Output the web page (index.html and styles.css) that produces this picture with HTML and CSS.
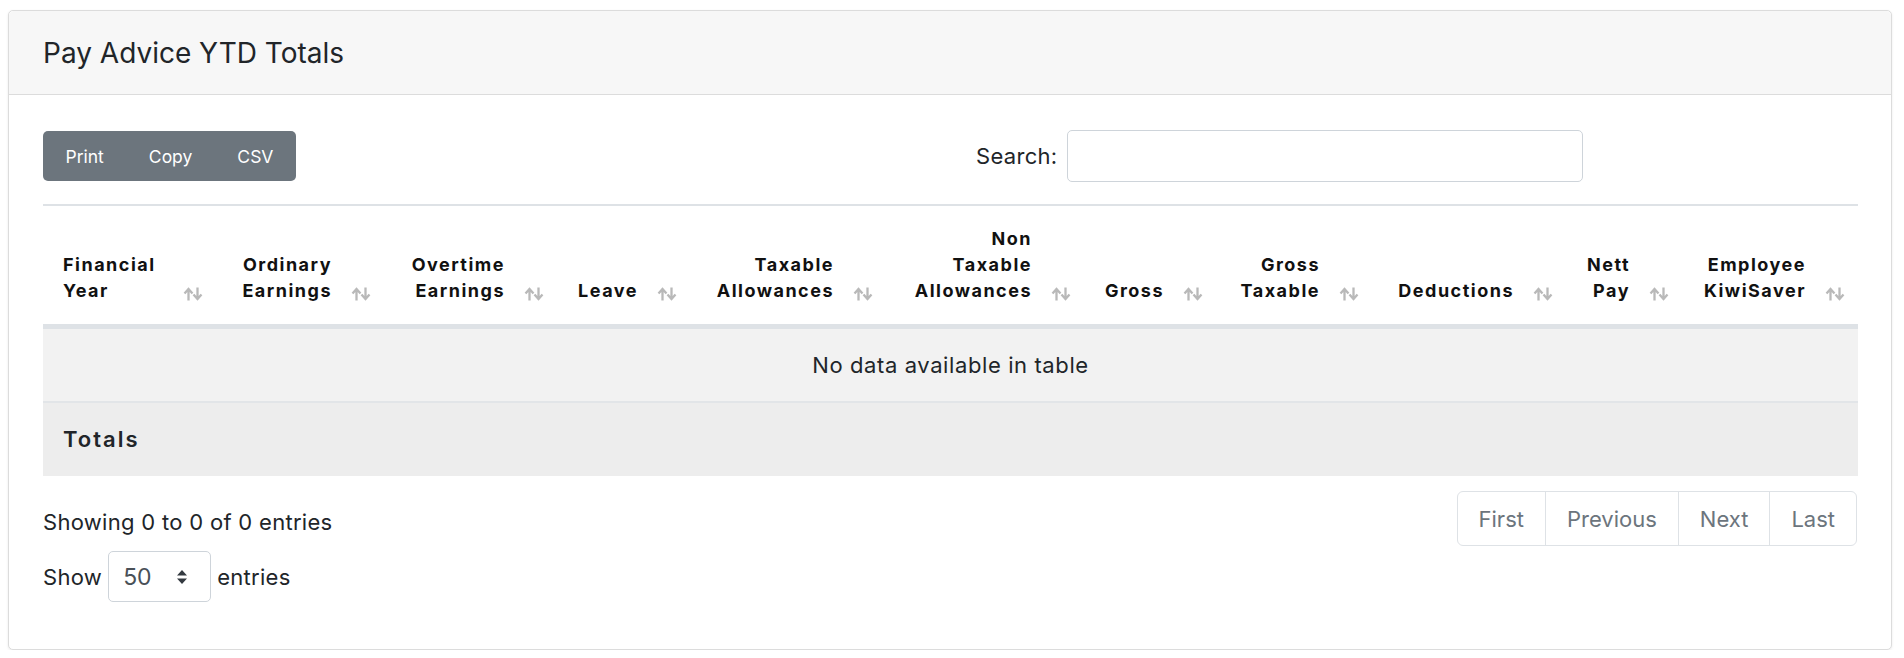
FILE: index.html
```html
<!DOCTYPE html>
<html lang="en">
<head>
  <meta charset="UTF-8" />
  <meta name="viewport" content="width=device-width, initial-scale=1" />
  <title>Pay Advice YTD Totals</title>
  <link rel="stylesheet" href="styles.css">
</head>
<body>
  <div class="card">
    <div class="card-header">
      <h4 class="card-title">Pay Advice YTD Totals</h4>
    </div>
    <div class="card-body">
      <div class="toolbar">
        <div class="btn-group">
          <button class="btn">Print</button>
          <button class="btn">Copy</button>
          <button class="btn">CSV</button>
        </div>
        <div class="search">
          <label>Search: <input type="search" class="search-input"></label>
        </div>
      </div>

      <table class="ytd-table">
        <thead>
          <tr>
            <th class="left">Financial<br>Year<span class="sort"><svg viewBox="0 0 20 14" width="20" height="14"><path d="M5.5 13.5V2.5M1.5 6.5 5.5 2 9.5 6.5M14.5 0.5v11M10.5 7.5 14.5 12 18.5 7.5" fill="none" stroke="#b9b9b9" stroke-width="2.3"/></svg></span></th>
            <th>Ordinary<br>Earnings<span class="sort"><svg viewBox="0 0 20 14" width="20" height="14"><path d="M5.5 13.5V2.5M1.5 6.5 5.5 2 9.5 6.5M14.5 0.5v11M10.5 7.5 14.5 12 18.5 7.5" fill="none" stroke="#b9b9b9" stroke-width="2.3"/></svg></span></th>
            <th>Overtime<br>Earnings<span class="sort"><svg viewBox="0 0 20 14" width="20" height="14"><path d="M5.5 13.5V2.5M1.5 6.5 5.5 2 9.5 6.5M14.5 0.5v11M10.5 7.5 14.5 12 18.5 7.5" fill="none" stroke="#b9b9b9" stroke-width="2.3"/></svg></span></th>
            <th>Leave<span class="sort"><svg viewBox="0 0 20 14" width="20" height="14"><path d="M5.5 13.5V2.5M1.5 6.5 5.5 2 9.5 6.5M14.5 0.5v11M10.5 7.5 14.5 12 18.5 7.5" fill="none" stroke="#b9b9b9" stroke-width="2.3"/></svg></span></th>
            <th>Taxable<br>Allowances<span class="sort"><svg viewBox="0 0 20 14" width="20" height="14"><path d="M5.5 13.5V2.5M1.5 6.5 5.5 2 9.5 6.5M14.5 0.5v11M10.5 7.5 14.5 12 18.5 7.5" fill="none" stroke="#b9b9b9" stroke-width="2.3"/></svg></span></th>
            <th>Non<br>Taxable<br>Allowances<span class="sort"><svg viewBox="0 0 20 14" width="20" height="14"><path d="M5.5 13.5V2.5M1.5 6.5 5.5 2 9.5 6.5M14.5 0.5v11M10.5 7.5 14.5 12 18.5 7.5" fill="none" stroke="#b9b9b9" stroke-width="2.3"/></svg></span></th>
            <th>Gross<span class="sort"><svg viewBox="0 0 20 14" width="20" height="14"><path d="M5.5 13.5V2.5M1.5 6.5 5.5 2 9.5 6.5M14.5 0.5v11M10.5 7.5 14.5 12 18.5 7.5" fill="none" stroke="#b9b9b9" stroke-width="2.3"/></svg></span></th>
            <th>Gross<br>Taxable<span class="sort"><svg viewBox="0 0 20 14" width="20" height="14"><path d="M5.5 13.5V2.5M1.5 6.5 5.5 2 9.5 6.5M14.5 0.5v11M10.5 7.5 14.5 12 18.5 7.5" fill="none" stroke="#b9b9b9" stroke-width="2.3"/></svg></span></th>
            <th>Deductions<span class="sort"><svg viewBox="0 0 20 14" width="20" height="14"><path d="M5.5 13.5V2.5M1.5 6.5 5.5 2 9.5 6.5M14.5 0.5v11M10.5 7.5 14.5 12 18.5 7.5" fill="none" stroke="#b9b9b9" stroke-width="2.3"/></svg></span></th>
            <th>Nett<br>Pay<span class="sort"><svg viewBox="0 0 20 14" width="20" height="14"><path d="M5.5 13.5V2.5M1.5 6.5 5.5 2 9.5 6.5M14.5 0.5v11M10.5 7.5 14.5 12 18.5 7.5" fill="none" stroke="#b9b9b9" stroke-width="2.3"/></svg></span></th>
            <th>Employee<br>KiwiSaver<span class="sort"><svg viewBox="0 0 20 14" width="20" height="14"><path d="M5.5 13.5V2.5M1.5 6.5 5.5 2 9.5 6.5M14.5 0.5v11M10.5 7.5 14.5 12 18.5 7.5" fill="none" stroke="#b9b9b9" stroke-width="2.3"/></svg></span></th>
          </tr>
        </thead>
        <tbody>
          <tr class="linha-vazia">
            <td colspan="11">No data available in table</td>
          </tr>
        </tbody>
        <tfoot>
          <tr>
            <th colspan="11">Totals</th>
          </tr>
        </tfoot>
      </table>

      <div class="table-footer">
        <div class="info-col">
          <div class="info">Showing 0 to 0 of 0 entries</div>
          <div class="length">
            Show
            <span class="select-wrap">
              <select class="length-select">
                <option>50</option>
              </select>
              <svg class="select-arrows" viewBox="0 0 12 16" width="12" height="16"><path d="M6 1 11 6.5H1ZM6 15 11 9.5H1Z" fill="#343a40"/></svg>
            </span>
            entries
          </div>
        </div>
        <ul class="pagination">
          <li><a href="#">First</a></li>
          <li><a href="#">Previous</a></li>
          <li><a href="#">Next</a></li>
          <li><a href="#">Last</a></li>
        </ul>
      </div>
    </div>
  </div>
</body>
</html>
```

FILE: styles.css
```css
body {
  margin: 0;
  padding: 10px 12px 0 8px;
  background: #fff;
  font-family: 'Inter', 'Open Sans', sans-serif;
  color: #212529;
}

.card {
  border: 1px solid #dcdcdc;
  border-radius: 5px;
  box-shadow: 0 1px 3px rgba(0, 0, 0, 0.08);
  background: #fff;
}

.card-header {
  background: #f7f7f7;
  border-bottom: 1px solid #dcdcdc;
  border-radius: 5px 5px 0 0;
  height: 83px;
  padding: 0 34px;
  display: flex;
  align-items: center;
}

.card-title {
  margin: 0;
  font-size: 28px;
  font-weight: 400;
  color: #212529;
}

.card-body {
  padding: 35px 34px 47px;
}

.toolbar {
  display: grid;
  grid-template-columns: 1fr 1fr;
  align-items: center;
  margin-bottom: 22px;
}

.btn-group {
  display: flex;
}

.btn {
  background: #6c757d;
  color: #fff;
  border: none;
  height: 50px;
  padding: 0 22.5px;
  font-family: inherit;
  font-size: 17.5px;
  cursor: pointer;
}

.btn:first-child {
  border-radius: 5px 0 0 5px;
}

.btn:last-child {
  border-radius: 0 5px 5px 0;
}

.search {
  padding-left: 26px;
}

.search label {
  display: flex;
  align-items: center;
  gap: 10px;
  font-size: 22px;
  letter-spacing: 0.3px;
}

.search-input {
  width: 516px;
  height: 52px;
  box-sizing: border-box;
  border: 1px solid #ced4da;
  border-radius: 5px;
  font-family: inherit;
  font-size: 20px;
  padding: 0 12px;
}

.ytd-table {
  width: 100%;
  border-collapse: collapse;
  table-layout: fixed;
  border-top: 2px solid #dee2e6;
}

.ytd-table thead th {
  box-sizing: border-box;
  position: relative;
  vertical-align: bottom;
  text-align: right;
  font-size: 18px;
  font-weight: 700;
  letter-spacing: 1.5px;
  line-height: 26px;
  color: #111;
  padding: 20px 52px 20px 20px;
  border-bottom: 5px solid #dee2e6;
}

.ytd-table thead th.left {
  text-align: left;
}

.ytd-table thead th:nth-child(1) { width: 173px; }
.ytd-table thead th:nth-child(2) { width: 168px; }
.ytd-table thead th:nth-child(3) { width: 173px; }
.ytd-table thead th:nth-child(4) { width: 133px; }
.ytd-table thead th:nth-child(5) { width: 196px; }
.ytd-table thead th:nth-child(6) { width: 198px; }
.ytd-table thead th:nth-child(7) { width: 132px; }
.ytd-table thead th:nth-child(8) { width: 156px; }
.ytd-table thead th:nth-child(9) { width: 194px; }
.ytd-table thead th:nth-child(10) { width: 116px; }
.ytd-table thead th:nth-child(11) { width: 176px; }

.sort {
  position: absolute;
  right: 13px;
  bottom: 23px;
  height: 14px;
  line-height: 0;
}

.linha-vazia td {
  background: #f2f2f2;
  text-align: center;
  font-size: 22px;
  letter-spacing: 0.6px;
  line-height: 30px;
  padding: 21px 0;
  border-bottom: 2px solid #e2e5e8;
}

.ytd-table tfoot th {
  background: #ededed;
  text-align: left;
  font-size: 22px;
  font-weight: 600;
  letter-spacing: 2px;
  line-height: 30px;
  padding: 21px 20px 22px;
}

.table-footer {
  display: flex;
  justify-content: space-between;
  align-items: flex-start;
}

.info {
  margin-top: 31px;
  font-size: 22px;
  letter-spacing: 0.3px;
  line-height: 30px;
}

.length {
  margin-top: 14px;
  display: flex;
  align-items: center;
  gap: 6px;
  font-size: 22px;
  letter-spacing: 0.3px;
}

.select-wrap {
  position: relative;
  display: inline-block;
}

.length-select {
  appearance: none;
  width: 103px;
  height: 51px;
  border: 1px solid #ced4da;
  border-radius: 5px;
  background: #fff;
  font-family: inherit;
  font-size: 23px;
  color: #495057;
  padding: 0 0 0 14px;
}

.select-arrows {
  position: absolute;
  right: 23px;
  top: 18px;
  pointer-events: none;
}

.pagination {
  display: flex;
  list-style: none;
  margin: 15px 0 0;
  padding: 0;
}

.pagination a {
  display: flex;
  align-items: center;
  height: 53px;
  padding: 0 21px;
  border: 1px solid #dee2e6;
  margin-left: -1px;
  color: #6c757d;
  text-decoration: none;
  font-size: 22px;
}

.pagination li:first-child a {
  margin-left: 0;
  border-radius: 6px 0 0 6px;
}

.pagination li:last-child a {
  border-radius: 0 6px 6px 0;
}
```
